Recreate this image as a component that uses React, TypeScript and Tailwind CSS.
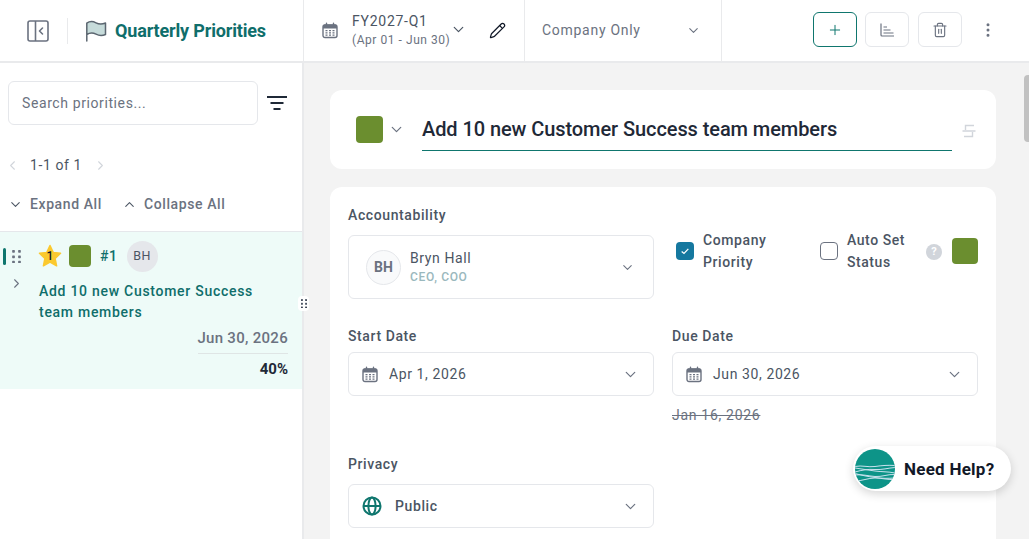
import { ChevronDown, ChevronUp, ChevronLeft, ChevronRight, Plus, EllipsisVertical, Pencil, Trash2 } from "lucide-react";

const Cal = ({ className = "" }: { className?: string }) => (
  <svg viewBox="0 0 16 16" className={className} fill="none">
    <rect x="1" y="2.5" width="14" height="12.5" rx="2" stroke="#6b7280" strokeWidth="1.4" />
    <path d="M1 3.5a1.5 1.5 0 0 1 1.5-1.5h11A1.5 1.5 0 0 1 15 3.5V6H1z" fill="#6b7280" />
    <path d="M4.5 .8v2.6M11.5 .8v2.6" stroke="#6b7280" strokeWidth="1.4" strokeLinecap="round" />
    <path d="M3.5 8.2h2M7 8.2h2M10.500 8.200h2M3.500 10.400h2M7 10.400h2M10.500 10.400h2M3.500 12.600h2M7 12.600h2M10.500 12.600h2" stroke="#6b7280" strokeWidth="1.2" />
  </svg>
);

const Grip = ({ className = "", color = "#6b7280" }: { className?: string; color?: string }) => (
  <svg viewBox="0 0 8 12" className={className} fill={color}>
    {[1, 6, 11].map((y) => (
      <g key={y}>
        <rect x="0" y={y - 1} width="2.500" height="2.500" rx=".6" />
        <rect x="5.500" y={y - 1} width="2.500" height="2.500" rx=".6" />
      </g>
    ))}
  </svg>
);

const Box = ({ children }: { children: React.ReactNode }) => (
  <div className="flex h-[44px] items-center rounded-md border border-[#e5e7eb] bg-white pl-[13px] pr-[14px]">
    {children}
    <ChevronDown className="ml-auto h-[17px] w-[17px] text-[#6b7280]" strokeWidth={1.7} />
  </div>
);

const Label = ({ children, className = "" }: { children: React.ReactNode; className?: string }) => (
  <div className={`text-[14px] font-medium leading-[20px] tracking-[0.6px] text-[#4b5563] ${className}`}>{children}</div>
);

export default function App() {
  return (
    <div className="relative h-[539px] w-[1029px] overflow-hidden bg-white text-[14px] [font-family:Roboto,sans-serif]">
      {/* header */}
      <header className="flex h-[63px] border-b-2 border-[#e9eaec] bg-white">
        <div className="flex w-[304px] shrink-0 items-center border-r border-[#e9eaec] pl-[27px]">
          <svg viewBox="0 0 22 22" className="h-[22px] w-[22px]" fill="none" stroke="#6b7280" strokeWidth="1.600">
            <rect x="1" y="1" width="20" height="20" rx="2" />
            <path d="M8.500 1v20" />
            <path d="M15.500 8 12.500 11l3 3" strokeLinecap="round" strokeLinejoin="round" />
          </svg>
          <div className="ml-[18px] h-[26px] w-px bg-[#e9eaec]" />
          <svg viewBox="0 0 22 22" className="ml-[17px] h-[22px] w-[22px]" fill="none">
            <path d="M2 3.200C5 .8 8 1.200 11 2.800s6 1.600 9.500 .2v11.500c-3.500 1.500-6.500 1.200-9.500-.3S5 12.600 2 14.500z" fill="#c6dbda" />
            <path d="M1.800 21V3.200C5 .8 8 1.200 11 2.800s6 1.600 9.500 .2v11.500c-3.500 1.500-6.500 1.200-9.500-.3S5 12.600 1.800 14.500" stroke="#5b6670" strokeWidth="1.500" strokeLinecap="round" strokeLinejoin="round" />
          </svg>
          <span className="ml-[8px] mt-[-1px] whitespace-nowrap text-[18px] font-bold tracking-[-0.16px] text-[#0f6e6b]">Quarterly Priorities</span>
        </div>
        <div className="flex w-[221px] shrink-0 items-center border-r border-[#e9eaec] pl-[18px]">
          <Cal className="h-[17px] w-[16px]" />
          <div className="ml-[14px] mt-[-1px] w-[101px]">
            <div className="text-[14px] leading-[20px] tracking-[0.75px] text-[#4b5563]">FY2027-Q1</div>
            <div className="whitespace-nowrap text-[12px] leading-[19px] tracking-[0.55px] text-[#6b7280]">(Apr 01 - Jun 30)</div>
          </div>
          <ChevronDown className="ml-[-3px] mt-[-2px] h-[17px] w-[17px] text-[#4b5563]" strokeWidth={1.7} />
          <Pencil className="ml-[22px] h-[17px] w-[17px] text-[#111827]" strokeWidth={1.700} />
        </div>
        <div className="flex w-[197px] shrink-0 items-center border-r border-[#e9eaec] pl-[17px]">
          <span className="whitespace-nowrap text-[14px] tracking-[0.72px] text-[#6b7280]">Company Only</span>
          <ChevronDown className="ml-[45px] h-[15px] w-[15px] text-[#6b7280]" strokeWidth={1.700} />
        </div>
        <div className="flex flex-1 items-center pb-[2px] pl-[91px]">
          <button className="flex h-[35px] w-[44px] items-center justify-center rounded-md border border-[#0f766e] bg-white">
            <Plus className="h-[16px] w-[16px] text-[#0f766e]" strokeWidth={1.500} />
          </button>
          <button className="ml-[8px] flex h-[35px] w-[44px] items-center justify-center rounded-md border border-[#e5e7eb] bg-white">
            <svg viewBox="0 0 14 14" className="h-[14px] w-[14px]" fill="none" stroke="#6b7280" strokeWidth="1.200">
              <path d="M1 .5v11.500a1 1 0 0 0 1 1h12" />
              <path d="M3.500 4h3.500M3.500 7h7M3.500 10h10" />
            </svg>
          </button>
          <button className="ml-[9px] flex h-[35px] w-[44px] items-center justify-center rounded-md border border-[#e5e7eb] bg-white">
            <Trash2 className="h-[16px] w-[16px] text-[#6b7280]" strokeWidth={1.700} />
          </button>
          <EllipsisVertical className="ml-[17px] h-[18px] w-[18px] text-[#6b7280]" strokeWidth={2} />
        </div>
      </header>

      <div className="flex h-[476px]">
        {/* sidebar */}
        <aside className="w-[304px] shrink-0 border-r-2 border-[#e9eaec] bg-white">
          <div className="flex items-center pl-[8px] pt-[18px]">
            <div className="flex h-[44px] w-[250px] items-center rounded-md border border-[#e5e7eb] pl-[13px] text-[14px] tracking-[0.6px] text-[#6b7280]">Search priorities...</div>
            <svg viewBox="0 0 20 14" className="ml-[9px] h-[14px] w-[20px]" stroke="#1f2937" strokeWidth="2">
              <path d="M0 1h20M3.500 7h13M6.500 13h7" />
            </svg>
          </div>
          <div className="mt-[30px] flex h-[20px] items-center pl-[5px] text-[#6b7280]">
            <ChevronLeft className="h-[15px] w-[15px] text-[#d1d5db]" strokeWidth={1.700} />
            <span className="ml-[10px] tracking-[0.6px] text-[#4b5563]">1-1 of 1</span>
            <ChevronRight className="ml-[11px] h-[15px] w-[15px] text-[#d1d5db]" strokeWidth={1.700} />
          </div>
          <div className="mt-[19px] flex h-[20px] items-center pl-[8px] font-medium tracking-[0.6px] text-[#6b7280]">
            <ChevronDown className="h-[15px] w-[15px] text-[#4b5563]" strokeWidth={1.700} />
            <span className="ml-[7px]">Expand All</span>
            <ChevronUp className="ml-[20px] h-[15px] w-[15px] text-[#4b5563]" strokeWidth={1.700} />
            <span className="ml-[7px]">Collapse All</span>
          </div>
          <div className="mt-[17px] h-[158px] border-t border-[#e5e7eb] bg-[#eefbf8]">
            <div className="flex h-[48px] items-center pl-[3px]">
              <div className="h-[17px] w-[3px] rounded-sm bg-[#0f766e]" />
              <Grip className="ml-[6px] h-[13px] w-[9px]" />
              <div className="relative ml-[17px] flex h-[24px] w-[24px] items-center justify-center">
                <svg viewBox="0 0 24 24" className="absolute inset-0">
                  <path d="M12 1.500l3.200 6.900 7.300.9-5.400 5.100 1.500 7.400L12 18.100l-6.600 3.700 1.500-7.400L1.500 9.300l7.300-.9z" fill="#fbc92f" stroke="#fbc92f" strokeWidth="1.500" strokeLinejoin="round" />
                </svg>
                <span className="relative text-[12px] font-medium text-[#111827]">1</span>
              </div>
              <div className="ml-[7px] h-[22px] w-[22px] rounded bg-[#6b8e2f]" />
              <span className="ml-[9px] font-medium tracking-[0.6px] text-[#0f6e6b]">#1</span>
              <div className="ml-[9px] flex h-[31px] w-[31px] items-center justify-center rounded-full bg-[#e5e7eb] text-[12.500px] tracking-[0.4px] text-[#4b5563]">BH</div>
            </div>
            <div className="flex">
              <ChevronRight className="ml-[9px] mt-[-4px] h-[15px] w-[15px] text-[#6b7280]" strokeWidth={1.700} />
              <div className="ml-[15px] mt-[1px] w-[249px]">
                <div className="pr-[20px] text-[14px] font-medium leading-[21px] tracking-[0.72px] text-[#0f6e6b]">Add 10 new Customer Success team members</div>
                <div className="mt-[5px] text-right text-[15px] font-medium leading-[20px] tracking-[0.3px] text-[#6b7280]">Jun 30, 2026</div>
                <div className="ml-[159px] mt-[5px] border-t border-[#dfe5e5]" />
                <div className="mt-[5px] text-right text-[15px] font-bold leading-[20px] text-[#1f2937]">40%</div>
              </div>
            </div>
          </div>
        </aside>

        {/* main */}
        <main className="flex-1 overflow-hidden bg-[#f3f3f3] pl-[26px] pr-[33px] pt-[27px]">
          <div className="flex h-[79px] items-center rounded-xl bg-white pl-[26px] pr-[20px]">
            <div className="h-[27px] w-[27px] rounded bg-[#6b8e2f]" />
            <ChevronDown className="ml-[5px] h-[17px] w-[17px] text-[#6b7280]" strokeWidth={1.700} />
            <div className="ml-[17px] flex h-[43px] flex-1 items-center whitespace-nowrap border-b border-[#0f766e] text-[20px] font-medium tracking-[-0.08px] text-[#1f2937]">Add 10 new Customer Success team members</div>
            <svg viewBox="0 0 14 14" className="ml-[10px] mt-[3px] h-[14px] w-[14px]" fill="none" stroke="#d1d5db" strokeWidth="1.400">
              <path d="M12 1.500H3.500v4.500M.5 7h13M2 12.500h8.500V8" />
            </svg>
          </div>

          <div className="mt-[18px] h-[400px] rounded-xl bg-white px-[18px] pt-[18px]">
            <div className="grid grid-cols-2 gap-x-[18px]">
              <div>
                <Label className="mb-[10px]">Accountability</Label>
                <div className="flex h-[64px] items-center rounded-md border border-[#e5e7eb] pl-[17px] pr-[18px]">
                  <div className="flex h-[35px] w-[35px] items-center justify-center rounded-full border border-[#e5e7eb] bg-[#f9fafb] text-[14px] font-bold text-[#6b7280]">BH</div>
                  <div className="ml-[9px]">
                    <div className="text-[14px] leading-[20px] tracking-[0.6px] text-[#4b5563]">Bryn Hall</div>
                    <div className="text-[12px] font-medium leading-[18px] tracking-[0.65px] text-[#9ab8bd]">CEO, COO</div>
                  </div>
                  <ChevronDown className="ml-auto h-[15px] w-[15px] text-[#6b7280]" strokeWidth={1.700} />
                </div>
              </div>
              <div className="flex items-start pt-[24px]">
                <div className="flex items-center pl-[4px]">
                  <div className="flex h-[18px] w-[18px] items-center justify-center rounded bg-[#15789f]">
                    <svg viewBox="0 0 12 12" className="h-[10px] w-[10px]" fill="none" stroke="white" strokeWidth="1.500"><path d="M2 6.500 4.800 9 10 3.500" /></svg>
                  </div>
                  <div className="ml-[9px] w-[80px] text-[14px] font-medium leading-[22px] tracking-[0.6px] text-[#4b5563]">Company Priority</div>
                </div>
                <div className="ml-[37px] flex items-center">
                  <div className="h-[18px] w-[18px] rounded border border-[#6b7280] bg-white" />
                  <div className="ml-[9px] w-[72px] text-[14px] font-medium leading-[22px] tracking-[0.55px] text-[#4b5563]">Auto Set Status</div>
                </div>
                <div className="ml-[7px] mt-[15px] flex h-[16px] w-[16px] shrink-0 items-center justify-center rounded-full bg-[#d1d5db] text-[11px] font-bold text-white">?</div>
                <div className="ml-[10px] mt-[9px] h-[26px] w-[26px] shrink-0 rounded bg-[#6b8e2f]" />
              </div>
            </div>

            <div className="mt-[27px] grid grid-cols-2 gap-x-[18px]">
              <div>
                <Label className="mb-[6px]">Start Date</Label>
                <Box>
                  <Cal className="h-[17px] w-[16px]" />
                  <span className="ml-[11px] tracking-[0.6px] text-[#4b5563]">Apr 1, 2026</span>
                </Box>
              </div>
              <div>
                <Label className="mb-[6px]">Due Date</Label>
                <Box>
                  <Cal className="h-[17px] w-[16px]" />
                  <span className="ml-[11px] tracking-[0.6px] text-[#4b5563]">Jun 30, 2026</span>
                </Box>
                <div className="mt-[9px] text-[14px] leading-[20px] tracking-[0.7px] text-[#6b7280] line-through">Jan 16, 2026</div>
              </div>
            </div>

            <div className="mt-[29px] grid grid-cols-2 gap-x-[18px]">
              <div>
                <Label className="mb-[10px]">Privacy</Label>
                <Box>
                  <svg viewBox="0 0 20 20" className="h-[20px] w-[20px]" fill="none" stroke="#0f766e" strokeWidth="2">
                    <circle cx="10" cy="10" r="8.500" />
                    <ellipse cx="10" cy="10" rx="3.600" ry="8.500" />
                    <path d="M1.500 10h17" />
                  </svg>
                  <span className="ml-[13px] font-medium tracking-[0.6px] text-[#4b5563]">Public</span>
                </Box>
              </div>
            </div>
          </div>
        </main>
      </div>

      {/* scrollbar thumb */}
      <div className="absolute right-0 top-[75px] h-[67px] w-[5px] rounded-l-sm bg-[#c1c1c1]" />

      {/* resize handle */}
      <div className="absolute left-[298px] top-[296px] flex h-[15px] w-[11px] items-center justify-center rounded-sm bg-white">
        <Grip className="h-[9px] w-[6px]" color="#374151" />
      </div>

      {/* help widget */}
      <div className="absolute left-[853px] top-[446px] flex h-[45px] w-[158px] items-center rounded-full bg-white pl-[2px] shadow-[0_3px_10px_rgba(0,0,0,0.16)]">
        <svg viewBox="0 0 40 40" className="h-[40px] w-[40px]">
          <defs><clipPath id="c"><circle cx="20" cy="20" r="20" /></clipPath></defs>
          <circle cx="20" cy="20" r="20" fill="#0d9488" />
          <g clipPath="url(#c)" fill="none" stroke="#c9e2ee" strokeWidth="1">
            <path d="M0 17.500c7-1.500 13 1 20 0s13-1.500 20-1" />
            <path d="M0 19c7 1 13 2 20 3s13 .5 20 2" />
            <path d="M0 23c7-2 13-3 20-2.500s13-1.500 20-2" />
            <path d="M0 26c7-1 13 1 20 1.500s13-2.500 20-2" />
            <path d="M0 24.500c7 2 13 3 20 4s13 1 20 .5" />
            <path d="M0 32c7 0 13-3 20-3s13 2 20 1.500" />
          </g>
        </svg>
        <span className="ml-[9px] mt-[2px] whitespace-nowrap text-[17px] font-bold tracking-[0.25px] text-[#111827]">Need Help?</span>
      </div>
    </div>
  );
}
